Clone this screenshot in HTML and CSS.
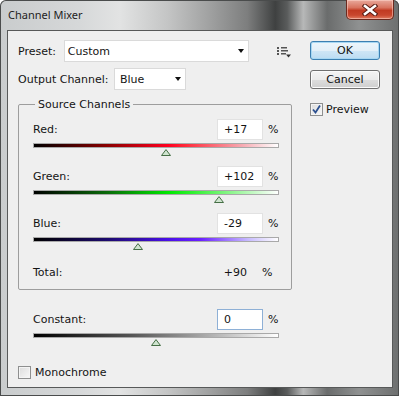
FILE: index.html
```html
<!DOCTYPE html>
<html lang="en">
<head>
    <meta charset="UTF-8">
    <title>Channel Mixer</title>
    <link rel="stylesheet" href="styles.css">
</head>
<body>
    <div class="window">
        <div class="titlebar">
            <span class="title">Channel Mixer</span>
            <button class="close-btn" aria-label="Close">
                <svg width="16" height="12" viewBox="0 0 16 12">
                    <path d="M3 2 L13 10 M13 2 L3 10" stroke="#5a1d14" stroke-width="4.6" stroke-linecap="square"/>
                    <path d="M3 2 L13 10 M13 2 L3 10" stroke="#ffffff" stroke-width="2.6" stroke-linecap="square"/>
                </svg>
            </button>
        </div>

        <div class="client">
            <div class="main">
                <div class="row preset-row">
                    <span class="field-label">Preset:</span>
                    <div class="select preset-select">
                        <span>Custom</span>
                        <span class="arrow"></span>
                    </div>
                    <span class="menu-icon">
                        <svg width="15" height="11" viewBox="0 0 15 11">
                            <rect x="0" y="0" width="2" height="2" fill="#555"/>
                            <rect x="0" y="3" width="2" height="2" fill="#555"/>
                            <rect x="0" y="6" width="2" height="2" fill="#555"/>
                            <rect x="4" y="0" width="6" height="1.5" fill="#555"/>
                            <rect x="4" y="3" width="7" height="1.5" fill="#555"/>
                            <rect x="4" y="6" width="5" height="1.5" fill="#555"/>
                            <path d="M9 7.5 L14 7.5 L11.5 10.5 Z" fill="#333"/>
                        </svg>
                    </span>
                </div>

                <div class="row output-row">
                    <span class="field-label">Output Channel:</span>
                    <div class="select output-select">
                        <span>Blue</span>
                        <span class="arrow"></span>
                    </div>
                </div>

                <fieldset class="source-group">
                    <legend>Source Channels</legend>

                    <div class="channel">
                        <div class="channel-head">
                            <span class="channel-name">Red:</span>
                            <span class="num-box">+17</span>
                            <span class="pct">%</span>
                        </div>
                        <div class="slider">
                            <div class="track track-red"></div>
                            <span class="thumb" style="left: 54.25%"></span>
                        </div>
                    </div>

                    <div class="channel">
                        <div class="channel-head">
                            <span class="channel-name">Green:</span>
                            <span class="num-box">+102</span>
                            <span class="pct">%</span>
                        </div>
                        <div class="slider">
                            <div class="track track-green"></div>
                            <span class="thumb" style="left: 75.5%"></span>
                        </div>
                    </div>

                    <div class="channel">
                        <div class="channel-head">
                            <span class="channel-name">Blue:</span>
                            <span class="num-box">-29</span>
                            <span class="pct">%</span>
                        </div>
                        <div class="slider">
                            <div class="track track-blue"></div>
                            <span class="thumb" style="left: 42.75%"></span>
                        </div>
                    </div>

                    <div class="total-row">
                        <span class="channel-name">Total:</span>
                        <span class="total-value">+90</span>
                        <span class="pct total-pct">%</span>
                    </div>
                </fieldset>

                <div class="constant">
                    <div class="channel-head">
                        <span class="channel-name">Constant:</span>
                        <span class="num-box focused">0</span>
                        <span class="pct">%</span>
                    </div>
                    <div class="slider">
                        <div class="track track-gray"></div>
                        <span class="thumb" style="left: 50%"></span>
                    </div>
                </div>

                <label class="check-row mono-row">
                    <span class="checkbox"></span>
                    <span>Monochrome</span>
                </label>
            </div>

            <div class="side">
                <button class="btn btn-default">OK</button>
                <button class="btn btn-cancel">Cancel</button>
                <label class="check-row preview-row">
                    <span class="checkbox checked">
                        <svg width="11" height="11" viewBox="0 0 11 11">
                            <path d="M2 5.5 L4.5 8.5 L9 1.5" fill="none" stroke="#2b4f8f" stroke-width="1.8"/>
                        </svg>
                    </span>
                    <span>Preview</span>
                </label>
            </div>
        </div>
    </div>
</body>
</html>
```

FILE: styles.css
```css
body {
    margin: 0;
    background: #ffffff;
    font-family: "DejaVu Sans", sans-serif;
    font-size: 11px;
    color: #141414;
}
.window {
    width: 399px;
    height: 396px;
    box-sizing: border-box;
    display: flex;
    flex-direction: column;
    border-radius: 6px 6px 0 0;
    background:
        linear-gradient(90deg, #c9cccd 0%, #d6d8d9 20%, #e2e3e3 30%, #c4c5c5 42%, #a2a3a3 52%, #7d7e7e 62%, #3f4141 69%, #5a5c5c 72%, #b7b8b8 76%, #6a6c6c 82%, #8f9191 90%, #6d6f6f 100%);
    box-shadow: inset 0 0 0 1px #4a4c4c;
}
.titlebar {
    height: 30px;
    display: flex;
    justify-content: space-between;
    align-items: flex-start;
    padding: 0 5px 0 8px;
}
.title {
    font-family: "Noto Sans", sans-serif;
    font-size: 11px;
    line-height: 30px;
    color: #1e1e1e;
}
.close-btn {
    width: 48px;
    height: 20px;
    margin: 0;
    padding: 0;
    border: 1px solid #6b2a1f;
    border-top: none;
    border-radius: 0 0 5px 5px;
    background: linear-gradient(to bottom, #e9a99c 0%, #d8735f 40%, #c13a22 55%, #c9472e 80%, #e07c62 100%);
    display: flex;
    justify-content: center;
    align-items: center;
    box-shadow: inset 0 0 0 1px rgba(255, 220, 210, 0.5);
}
.client {
    flex: 1;
    margin: 0 6px 8px 7px;
    border: 1px solid #575959;
    background: #efefef;
    padding: 9px 0 0 10px;
    display: grid;
    grid-template-columns: 274px 70px;
    column-gap: 18px;
    align-items: start;
}
.row {
    display: flex;
    align-items: center;
    height: 22px;
}
.output-row {
    margin-top: 6px;
}
.field-label {
    white-space: nowrap;
}
.preset-row .field-label {
    width: 46px;
}
.output-row .field-label {
    width: 96px;
}
.select {
    height: 22px;
    box-sizing: border-box;
    border: 1px solid #dadada;
    background: #ffffff;
    display: flex;
    align-items: center;
    justify-content: space-between;
    padding-right: 4px;
}
.preset-select {
    width: 186px;
    padding-left: 3px;
}
.output-select {
    width: 72px;
    padding-left: 5px;
}
.arrow {
    width: 0;
    height: 0;
    border-left: 3.5px solid transparent;
    border-right: 3.5px solid transparent;
    border-top: 4px solid #111;
}
.menu-icon {
    margin-left: 28px;
    display: flex;
    padding-top: 2px;
}
.source-group {
    margin: 8px 0 0 0;
    padding: 8px 12px 10px 14px;
    border: 1px solid #9d9d9d;
    border-radius: 2px;
    min-width: 0;
}
.source-group legend {
    padding: 0 3px;
    margin-left: 2px;
    line-height: 13px;
}
.channel {
    margin-bottom: 11px;
}
.channel-head {
    display: flex;
    align-items: center;
    height: 21px;
}
.channel-name {
    flex: 1;
}
.num-box {
    width: 46px;
    height: 21px;
    box-sizing: border-box;
    border: 1px solid #e2e2e2;
    background: #ffffff;
    padding-left: 6px;
    line-height: 19px;
}
.num-box.focused {
    border-color: #8eb0d6;
}
.pct {
    width: 11px;
    margin-left: 5px;
}
.slider {
    position: relative;
    height: 12px;
    margin-top: 3px;
}
.track {
    height: 5px;
    box-sizing: border-box;
    border: 1px solid #a9a9a9;
}
.track-red {
    background: linear-gradient(90deg, #000000 0%, #8a0000 30%, #ff0020 55%, #ff2a3a 62%, #f7a8b0 85%, #ffffff 100%);
}
.track-green {
    background: linear-gradient(90deg, #000000 0%, #0a6a0a 30%, #00e800 55%, #30f030 65%, #b8f8b8 88%, #ffffff 100%);
}
.track-blue {
    background: linear-gradient(90deg, #000000 0%, #1c0a6e 30%, #4a10e8 55%, #6a20ff 68%, #c8bcff 88%, #ffffff 100%);
}
.track-gray {
    background: linear-gradient(90deg, #000000 0%, #555555 40%, #9a9a9a 65%, #ffffff 100%);
}
.thumb {
    position: absolute;
    top: 6px;
    width: 10px;
    height: 7px;
    transform: translateX(-50%);
    background: url("data:image/svg+xml,%3Csvg xmlns='http://www.w3.org/2000/svg' width='10' height='7'%3E%3Cpath d='M0.5 6.5 L5 0.6 L9.5 6.5 Z' fill='%23cfe4cf' stroke='%23456e45'/%3E%3C/svg%3E") no-repeat;
}
.total-row {
    display: flex;
    align-items: center;
    height: 13px;
    margin-top: 17px;
}
.total-pct {
    margin-left: 15px;
    width: 17px;
}
.constant {
    margin-top: 19px;
    padding: 0 13px 0 15px;
}
.check-row {
    display: flex;
    align-items: center;
    gap: 4px;
    height: 13px;
}
.mono-row {
    margin-top: 21px;
}
.checkbox {
    width: 13px;
    height: 13px;
    box-sizing: border-box;
    border: 1px solid #8e8f8f;
    background: linear-gradient(135deg, #dcdcdc, #f8f8f8);
    box-shadow: inset 0 0 0 1px #f4f4f4;
    display: flex;
    align-items: center;
    justify-content: center;
}
.side {
    display: flex;
    flex-direction: column;
    margin-top: 1px;
}
.btn {
    height: 19px;
    padding: 0;
    font-family: "DejaVu Sans", sans-serif;
    font-size: 11px;
    color: #111;
    border: 1px solid #707070;
    border-radius: 3px;
    background: linear-gradient(to bottom, #f4f4f4 0%, #ebebeb 50%, #dddddd 51%, #cfcfcf 100%);
    box-shadow: inset 0 0 0 1px #fbfbfb;
}
.btn-default {
    border-color: #3c7fb1;
    background: linear-gradient(to bottom, #ecf5fb 0%, #e3eff8 50%, #cfe6f6 51%, #bcdcf2 100%);
    box-shadow: inset 0 0 0 1px #a7d7f3;
}
.btn-cancel {
    margin-top: 10px;
}
.preview-row {
    margin-top: 14px;
    gap: 3px;
}
```
